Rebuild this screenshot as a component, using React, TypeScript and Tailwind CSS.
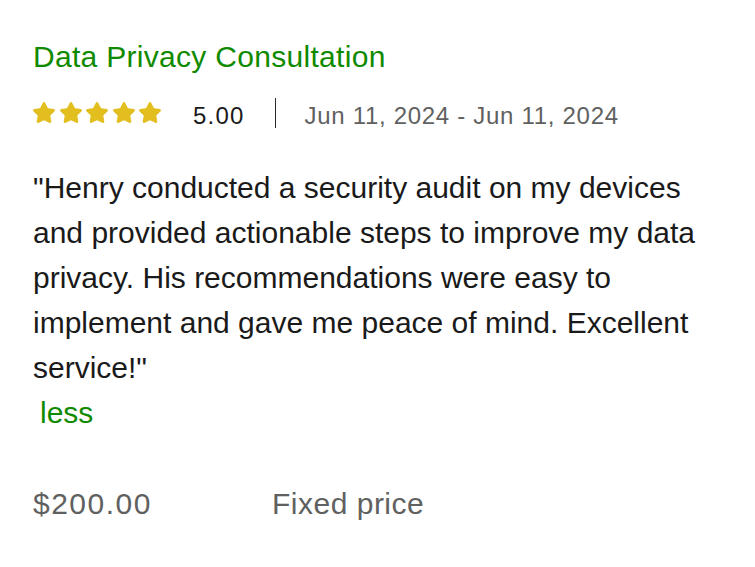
import React from "react";

function Star() {
  return (
    <svg width="24" height="24" viewBox="0 0 24 24" fill="#e2bf1f" stroke="#e2bf1f" strokeWidth="1.8" strokeLinejoin="round" strokeLinecap="round">
      <path d="M11.525 2.295a.53.53 0 0 1 .95 0l2.31 4.679a2.123 2.123 0 0 0 1.595 1.16l5.166.756a.53.53 0 0 1 .294.904l-3.736 3.638a2.123 2.123 0 0 0-.611 1.878l.882 5.14a.53.53 0 0 1-.771.56l-4.618-2.428a2.122 2.122 0 0 0-1.973 0L6.396 21.01a.53.53 0 0 1-.77-.56l.881-5.139a2.122 2.122 0 0 0-.611-1.879L2.16 9.795a.53.53 0 0 1 .294-.906l5.165-.755a2.122 2.122 0 0 0 1.597-1.16z" />
    </svg>
  );
}

export default function App() {
  return (
    <div
      className="min-h-[567px] w-[755px] bg-white pl-[33px] pt-[39px]"
      style={{ fontFamily: '"Liberation Sans", Arial, sans-serif' }}
    >
      <h2 className="text-[30px] leading-[36px] tracking-[0.3px] text-[#108a00] font-normal">
        Data Privacy Consultation
      </h2>

      <div className="mt-[20px] flex h-[36px] items-center">
        <div className="ml-[-1px] flex items-center gap-[2.5px]">
          <Star />
          <Star />
          <Star />
          <Star />
          <Star />
        </div>
        <span className="ml-[31px] pt-[6px] text-[24px] leading-[30px] tracking-[1.2px] text-[#1a1a1a]">
          5.00
        </span>
        <div className="ml-[30px] h-[30px] w-px bg-[#2a2a2a]" />
        <span className="ml-[29px] pt-[6px] text-[24px] leading-[30px] tracking-[0.7px] text-[#5f6160]">
          Jun 11, 2024 - Jun 11, 2024
        </span>
      </div>

      <div className="mt-[34px] w-[690px] text-[30px] leading-[45px] text-[#1a1a1a]">
        <p>
          "Henry conducted a security audit on my devices and provided actionable steps to improve my data privacy. His
          recommendations were easy to implement and gave me peace of mind. Excellent service!"
        </p>
        <p>
          {" "}
          <button className="ml-[7px] cursor-pointer text-[#108a00]">less</button>
        </p>
      </div>

      <div className="mt-[51px] flex text-[30px] leading-[36px] text-[#5f6160]">
        <span className="w-[239px] tracking-[1.5px]">$200.00</span>
        <span className="tracking-[0.5px]">Fixed price</span>
      </div>
    </div>
  );
}
